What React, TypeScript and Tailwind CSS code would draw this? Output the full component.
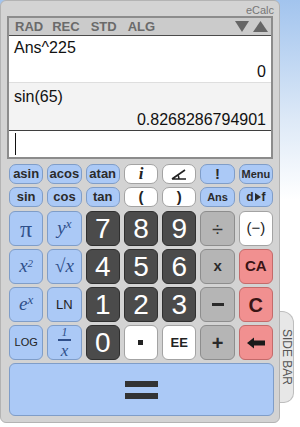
import React from "react";

const base =
  "flex items-center justify-center border font-['Liberation_Sans',Arial,sans-serif] select-none";

const blue = "bg-[#abc9f6] border-[#7f9dc8] text-[#2b2b2b]";
const white = "bg-white border-[#a3a3a3] text-[#222]";
const dark = "bg-[#4b4b4b] border-[#2f2f2f] text-white";
const gray = "bg-[#b5b5b5] border-[#8d8d8d] text-[#2a2a2a]";
const red = "bg-[#f19090] border-[#c46a6a] text-[#3a1515]";

function Small({ c, children }: { c: string; children: React.ReactNode }) {
  return <div className={`${base} ${c} h-[20px] rounded-[7px] text-[13px] font-bold`}>{children}</div>;
}

function Big({ c, children }: { c: string; children: React.ReactNode }) {
  return <div className={`${base} ${c} h-[35px] rounded-[6px]`}>{children}</div>;
}

const serif = "font-['Liberation_Serif','Times_New_Roman',serif] italic text-[#2f4f8a]";

const AngleIcon = () => (
  <svg width="18" height="12" viewBox="0 0 18 12">
    <path d="M2 11 L15 2 M2 11 H16 M9 11 A7 7 0 0 0 7.5 6.5" stroke="#222" strokeWidth="1.6" fill="none" />
  </svg>
);

const BackArrow = () => (
  <svg width="20" height="12" viewBox="0 0 20 12">
    <path d="M1 6 L8 0.5 V3.5 H19 V8.5 H8 V11.5 Z" fill="#1a1a1a" />
  </svg>
);

export default function App() {
  return (
    <div className="w-[300px] h-[427px] flex bg-[linear-gradient(180deg,#a2c4ee_0px,#dde9f7_120px,#ffffff_200px)] font-['Liberation_Sans',Arial,sans-serif]">
      <div className="w-[280px] h-[423px] shrink-0 bg-[#d3d3d3] border border-[#b3b3b3] rounded-[6px] flex flex-col">
        <div className="h-[15px] flex justify-end items-end pr-[5px] text-[11px] leading-none text-[#777]">eCalc</div>
        <div className="ml-[6px] w-[266px] h-[143px] border-2 border-[#8c8c8c] bg-white flex flex-col">
          <div className="h-[18px] shrink-0 bg-[#cbcbcb] border-b border-[#4a4a4a] flex items-center pl-[6px] pr-[3px] text-[13px] font-bold text-[#6a6a6a]">
            <span>RAD</span>
            <span className="ml-[9px]">REC</span>
            <span className="ml-[11px]">STD</span>
            <span className="ml-[11px]">ALG</span>
            <span className="ml-auto flex gap-[4px]">
              <svg width="14" height="11" viewBox="0 0 14 11"><path d="M0 0 H14 L7 11 Z" fill="#666" /></svg>
              <svg width="15" height="11" viewBox="0 0 15 11"><path d="M0 11 H15 L7.5 0 Z" fill="#666" /></svg>
            </span>
          </div>
          <div className="h-[46px] shrink-0 px-[5px] pt-[3px] text-[16px] leading-[18px] text-[#111] flex flex-col">
            <div>Ans^225</div>
            <div className="text-right mt-[6px]">0</div>
          </div>
          <div className="h-[48px] shrink-0 bg-[#f3f3f3] border-t border-[#dedede] px-[5px] pt-[5px] text-[16px] leading-[18px] text-[#111] flex flex-col">
            <div>sin(65)</div>
            <div className="text-right mt-[5px]">0.8268286794901</div>
          </div>
          <div className="flex-1 border-t border-[#3f3f3f] bg-white pl-[6px] py-[2px]">
            <div className="w-px h-full bg-[#111]" />
          </div>
        </div>

        <div className="ml-[8px] w-[264px] mt-[5px] grid grid-cols-7 gap-x-[4px] gap-y-[3px]">
          <Small c={blue}>asin</Small>
          <Small c={blue}>acos</Small>
          <Small c={blue}>atan</Small>
          <Small c={white}><span className="font-['Liberation_Serif',serif] italic text-[17px]">i</span></Small>
          <Small c={white}><AngleIcon /></Small>
          <Small c={blue}><span className="text-[15px]">!</span></Small>
          <Small c={blue}><span className="text-[11px]">Menu</span></Small>

          <Small c={blue}>sin</Small>
          <Small c={blue}>cos</Small>
          <Small c={blue}>tan</Small>
          <Small c={white}><span className="text-[15px]">(</span></Small>
          <Small c={white}><span className="text-[15px]">)</span></Small>
          <Small c={blue}><span className="text-[11px]">Ans</span></Small>
          <Small c={blue}>
            <span className="text-[12px] flex items-center gap-[1px]">
              d
              <svg width="6" height="8" viewBox="0 0 6 8"><path d="M0 0 L6 4 L0 8 Z" fill="#2b2b2b" /></svg>
              f
            </span>
          </Small>
        </div>

        <div className="ml-[8px] w-[264px] mt-[4px] grid grid-cols-7 gap-x-[4px] gap-y-[3px]">
          <Big c={blue}><span className={`${serif} text-[24px] not-italic`}>π</span></Big>
          <Big c={blue}><span className={`${serif} text-[19px]`}>y<sup className="text-[13px]">x</sup></span></Big>
          <Big c={dark}><span className="text-[28px]">7</span></Big>
          <Big c={dark}><span className="text-[28px]">8</span></Big>
          <Big c={dark}><span className="text-[28px]">9</span></Big>
          <Big c={gray}><span className="text-[20px] text-[#333]">÷</span></Big>
          <Big c={white}><span className="text-[15px]">(−)</span></Big>

          <Big c={blue}><span className={`${serif} text-[19px]`}>x<sup className="text-[11px]">2</sup></span></Big>
          <Big c={blue}><span className={`${serif} text-[19px]`}>√x</span></Big>
          <Big c={dark}><span className="text-[28px]">4</span></Big>
          <Big c={dark}><span className="text-[28px]">5</span></Big>
          <Big c={dark}><span className="text-[28px]">6</span></Big>
          <Big c={gray}><span className="text-[15px] font-bold">x</span></Big>
          <Big c={red}><span className="text-[15px] font-bold">CA</span></Big>

          <Big c={blue}><span className={`${serif} text-[19px]`}>e<sup className="text-[13px]">x</sup></span></Big>
          <Big c={blue}><span className="text-[13px] text-[#222]">LN</span></Big>
          <Big c={dark}><span className="text-[28px]">1</span></Big>
          <Big c={dark}><span className="text-[28px]">2</span></Big>
          <Big c={dark}><span className="text-[28px]">3</span></Big>
          <Big c={gray}><span className="w-[12px] h-[3px] bg-[#2a2a2a]" /></Big>
          <Big c={red}><span className="text-[20px] font-bold">C</span></Big>

          <Big c={blue}><span className="text-[11px] text-[#222]">LOG</span></Big>
          <Big c={blue}>
            <span className={`${serif} flex flex-col items-center leading-none`}>
              <span className="text-[12px]">1</span>
              <span className="w-[13px] h-[1.5px] bg-[#2f4f8a] my-[1px]" />
              <span className="text-[17px]">x</span>
            </span>
          </Big>
          <Big c={dark}><span className="text-[28px]">0</span></Big>
          <Big c={white}><span className="w-[5px] h-[5px] bg-[#222]" /></Big>
          <Big c={white}><span className="text-[13px] font-bold">EE</span></Big>
          <Big c={gray}><span className="text-[20px] font-bold">+</span></Big>
          <Big c={red}><BackArrow /></Big>
        </div>

        <div className={`${base} ${blue} ml-[8px] w-[265px] mt-[3px] h-[53px] rounded-[6px] flex-col gap-[6px]`}>
          <span className="w-[33px] h-[6px] bg-[#333]" />
          <span className="w-[33px] h-[6px] bg-[#333]" />
        </div>
      </div>

      <div className="flex-1 flex flex-col pt-[311px]">
        <div className="w-[14px] h-[92px] bg-[#e7e7e7] border border-l-0 border-[#bdbdbd] rounded-tr-[12px] rounded-br-[10px] flex items-center justify-center">
          <span className="[writing-mode:vertical-rl] text-[12px] text-[#555] leading-none">SIDE BAR</span>
        </div>
      </div>
    </div>
  );
}
